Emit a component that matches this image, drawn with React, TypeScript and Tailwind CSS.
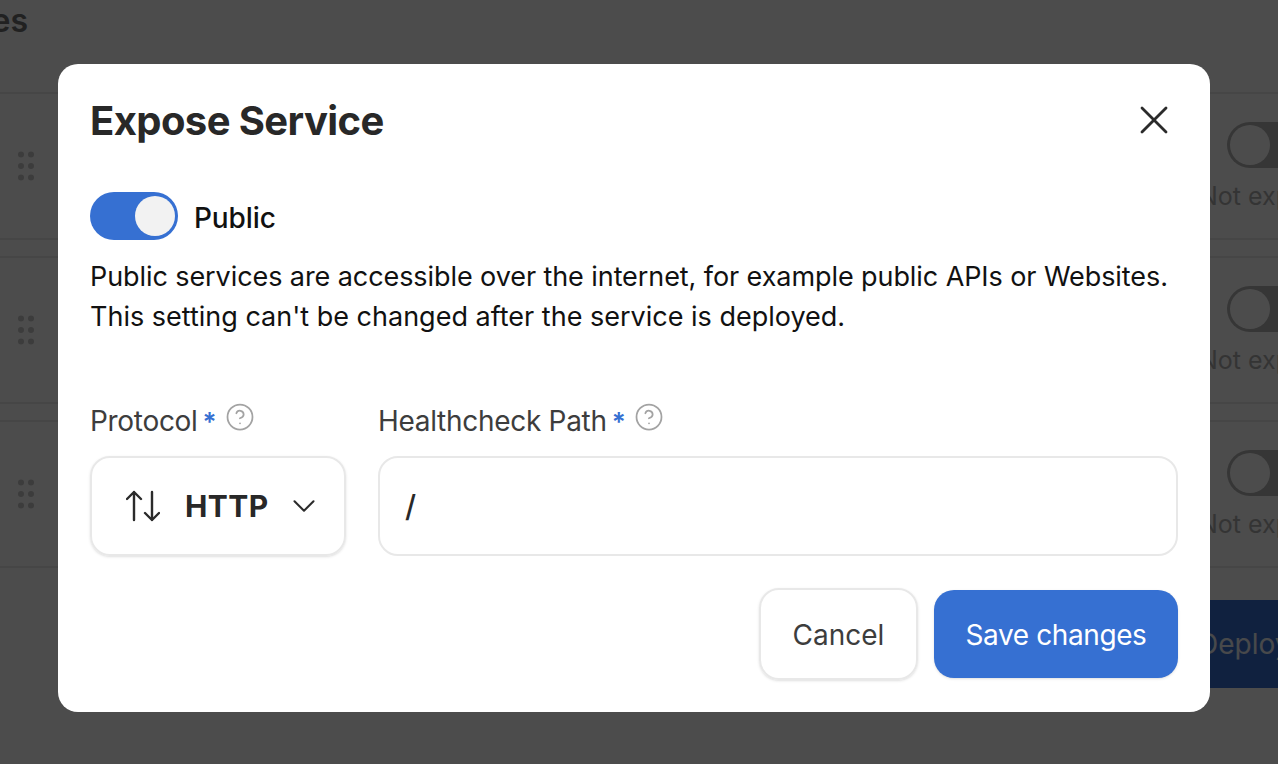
import { ChevronDown, CircleHelp, X } from 'lucide-react';

const font = { fontFamily: 'Inter, "Open Sans", sans-serif' };

const DragDots = () => (
  <svg width="18" height="30" viewBox="0 0 18 30" fill="#c8c8c8">
    <circle cx="4" cy="3.5" r="3" />
    <circle cx="14" cy="3.5" r="3" />
    <circle cx="4" cy="15" r="3" />
    <circle cx="14" cy="15" r="3" />
    <circle cx="4" cy="26.5" r="3" />
    <circle cx="14" cy="26.5" r="3" />
  </svg>
);

// up arrow and down arrow next to each other, the transfer icon in the select
const UpDownIcon = () => (
  <svg width="34" height="32" viewBox="0 0 34 32" fill="none" stroke="#2b2b2b" strokeWidth="2.4" strokeLinecap="round" strokeLinejoin="round">
    <path d="M8 30V2M1 9l7-7 7 7" />
    <path d="M26 2v28M19 23l7 7 7-7" />
  </svg>
);

function ServiceRow() {
  return (
    <div className="flex w-[1500px] h-[148px] items-center border-y-2 border-[#ebebeb] pl-[17px]">
      <DragDots />
      <div className="ml-[1164px] flex flex-col items-start gap-[10px] pt-[4px]">
        <div className="ml-[28px] flex h-[46px] w-[88px] items-center rounded-full bg-[#b4b4b4] pl-[3px]">
          <div className="h-[40px] w-[40px] rounded-full bg-white" />
        </div>
        <span className="text-[25px] leading-[36px] text-[#b0b0b0] whitespace-nowrap">Not exposed</span>
      </div>
    </div>
  );
}

function Background() {
  return (
    <div className="h-[764px] w-[1278px] overflow-hidden bg-white">
      <div className="flex h-[92px] items-start">
        <h1 className="flex w-[28px] justify-end overflow-hidden pt-[3px] text-[32px] leading-[36px] font-semibold text-[#707070]">Services</h1>
      </div>
      <div className="flex flex-col gap-[16px]">
        <ServiceRow />
        <ServiceRow />
        <ServiceRow />
      </div>
      <div className="mt-[32px] flex justify-end">
        <div className="flex h-[88px] w-[120px] shrink-0 items-center overflow-hidden bg-[#3670d2] text-[28px] whitespace-nowrap text-[#f0f4fa]">
          <span className="ml-[40px]">Deploy</span>
        </div>
      </div>
    </div>
  );
}

function FieldLabel({ text }: { text: string }) {
  return (
    <div className="flex h-[40px] items-center whitespace-nowrap">
      <span className="pt-[2px] text-[28px] tracking-[-0.3px] text-[#3d3d3d]">{text}</span>
      <span className="ml-[5px] pt-[2px] text-[26px] font-semibold text-[#3670d2]">*</span>
      <CircleHelp size={30} strokeWidth={1.4} className="mb-[7px] ml-[8px] text-[#a3a3a3]" />
    </div>
  );
}

export default function App() {
  return (
    <div className="relative h-[764px] w-[1278px] overflow-hidden" style={font}>
      <Background />
      <div className="absolute inset-0 bg-black/70 pt-[64px] pl-[58px]">
        <div className="flex h-[648px] w-[1152px] flex-col rounded-[20px] bg-white px-[32px]">
          <div className="flex h-[112px] items-center justify-between">
            <h2 className="pt-[2px] text-[40px] leading-[48px] font-bold tracking-[-0.6px] text-[#282828]">Expose Service</h2>
            <X size={48} strokeWidth={1.4} className="text-[#2b2b2b]" />
          </div>
          <div className="mt-[16px] flex items-center gap-[16px]">
            <div className="flex h-[48px] w-[88px] items-center justify-end rounded-full bg-[#3670d2] pr-[3px]">
              <div className="h-[40px] w-[40px] rounded-full bg-[#f2f2f2]" />
            </div>
            <span className="pt-[3px] text-[28px] leading-[40px] font-[450] tracking-[-0.1px] text-[#111111]">Public</span>
          </div>
          <p className="mt-[17px] text-[27px] leading-[40px] text-[#111111]">
            <span className="tracking-[-0.08px]">Public services are accessible over the internet, for example public APIs or Websites.</span>
            <br />
            This setting can't be changed after the service is deployed.
          </p>
          <div className="mt-[63px] flex gap-[32px]">
            <div className="flex w-[256px] flex-col gap-[16px]">
              <FieldLabel text="Protocol" />
              <div className="flex h-[100px] items-center rounded-[20px] border-2 border-[#e8e8e8] pl-[34px] shadow-sm">
                <UpDownIcon />
                <span className="ml-[25px] text-[30px] font-bold tracking-[0.4px] text-[#282828]">HTTP</span>
                <ChevronDown size={38} strokeWidth={1.3} className="ml-[16px] text-[#2b2b2b]" />
              </div>
            </div>
            <div className="flex flex-1 flex-col gap-[16px]">
              <FieldLabel text="Healthcheck Path" />
              <div className="flex h-[100px] items-center rounded-[20px] border-2 border-[#e8e8e8] pl-[25px] text-[30px] font-medium text-[#282828]">/</div>
            </div>
          </div>
          <div className="mt-[32px] flex items-center justify-end gap-[16px]">
            <button className="h-[92px] w-[159px] rounded-[20px] border-2 border-[#e8e8e8] pt-[2px] text-[28px] text-[#3d3d3d] shadow-sm">Cancel</button>
            <button className="h-[88px] w-[244px] rounded-[20px] bg-[#3670d2] pt-[2px] text-[28px] tracking-[-0.4px] text-white shadow-sm">Save changes</button>
          </div>
        </div>
      </div>
    </div>
  );
}
